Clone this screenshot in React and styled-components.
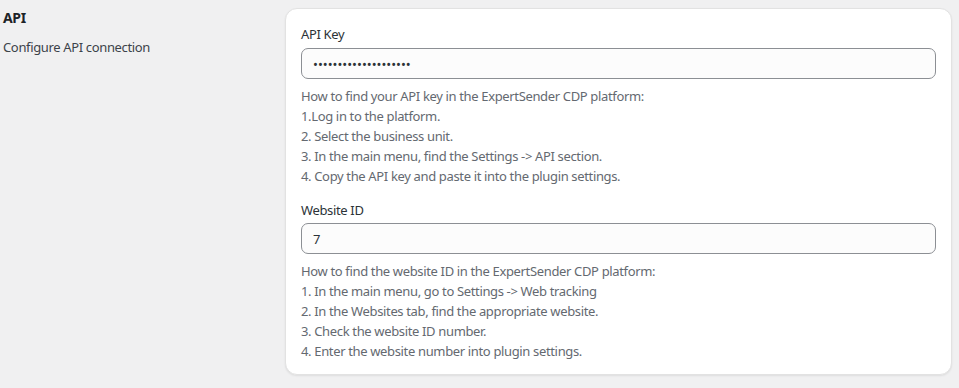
import React from "react";
import styled, { createGlobalStyle } from "styled-components";

const GlobalStyle = createGlobalStyle`
  body {
    margin: 0;
    background: #f0f0f1;
    font-family: "Segoe UI", "Noto Sans", sans-serif;
    letter-spacing: -0.35px;
    color: #3c434a;
  }
`;

const Page = styled.div`
  display: flex;
  align-items: flex-start;
  padding: 8px 7px 0 0;
  height: 388px;
  box-sizing: border-box;
`;

const Intro = styled.div`
  width: 285px;
  flex-shrink: 0;
  padding-left: 3px;
  padding-top: 1px;
  box-sizing: border-box;
  h2 {
    margin: 0;
    font-size: 14px;
    font-weight: 700;
    line-height: 18px;
    color: #1d2327;
  }
  p {
    margin: 10px 0 0;
    font-size: 13px;
    line-height: 20px;
    color: #3c434a;
  }
`;

const Card = styled.div`
  flex: 1;
  background: #fff;
  border: 1px solid #e2e2e2;
  border-radius: 12px;
  box-shadow: 0 1px 2px rgba(0, 0, 0, 0.08);
  padding: 15px 15px 13px;
`;

const Field = styled.div`
  & + & {
    margin-top: 14px;
  }
`;

const Label = styled.label`
  display: block;
  font-size: 13px;
  line-height: 20px;
  color: #2c3338;
  margin-bottom: ${(p) => p.$gap || 4}px;
`;

const Input = styled.input`
  display: block;
  width: 100%;
  box-sizing: border-box;
  height: 31px;
  padding: 0 11px;
  border: 1px solid #8c8f94;
  border-radius: 7px;
  background: #fcfcfc;
  font-family: inherit;
  font-size: 13px;
  color: #2c3338;
  outline: none;
`;

const Help = styled.div`
  margin-top: 7px;
  font-size: 13px;
  line-height: 20px;
  color: #646970;
`;

const fields = [
  {
    label: "API Key",
    type: "password",
    value: "abcdefghijklmnopqrst",
    gap: 4,
    help: [
      "How to find your API key in the ExpertSender CDP platform:",
      "1.Log in to the platform.",
      "2. Select the business unit.",
      "3. In the main menu, find the Settings -> API section.",
      "4. Copy the API key and paste it into the plugin settings.",
    ],
  },
  {
    label: "Website ID",
    type: "text",
    value: "7",
    gap: 3,
    help: [
      "How to find the website ID in the ExpertSender CDP platform:",
      "1. In the main menu, go to Settings -> Web tracking",
      "2. In the Websites tab, find the appropriate website.",
      "3. Check the website ID number.",
      "4. Enter the website number into plugin settings.",
    ],
  },
];

export default function App() {
  return (
    <>
      <GlobalStyle />
      <Page>
        <Intro>
          <h2>API</h2>
          <p>Configure API connection</p>
        </Intro>
        <Card>
          {fields.map((f) => (
            <Field key={f.label}>
              <Label $gap={f.gap}>{f.label}</Label>
              <Input type={f.type} defaultValue={f.value} readOnly />
              <Help>
                {f.help.map((line) => (
                  <div key={line}>{line}</div>
                ))}
              </Help>
            </Field>
          ))}
        </Card>
      </Page>
    </>
  );
}
